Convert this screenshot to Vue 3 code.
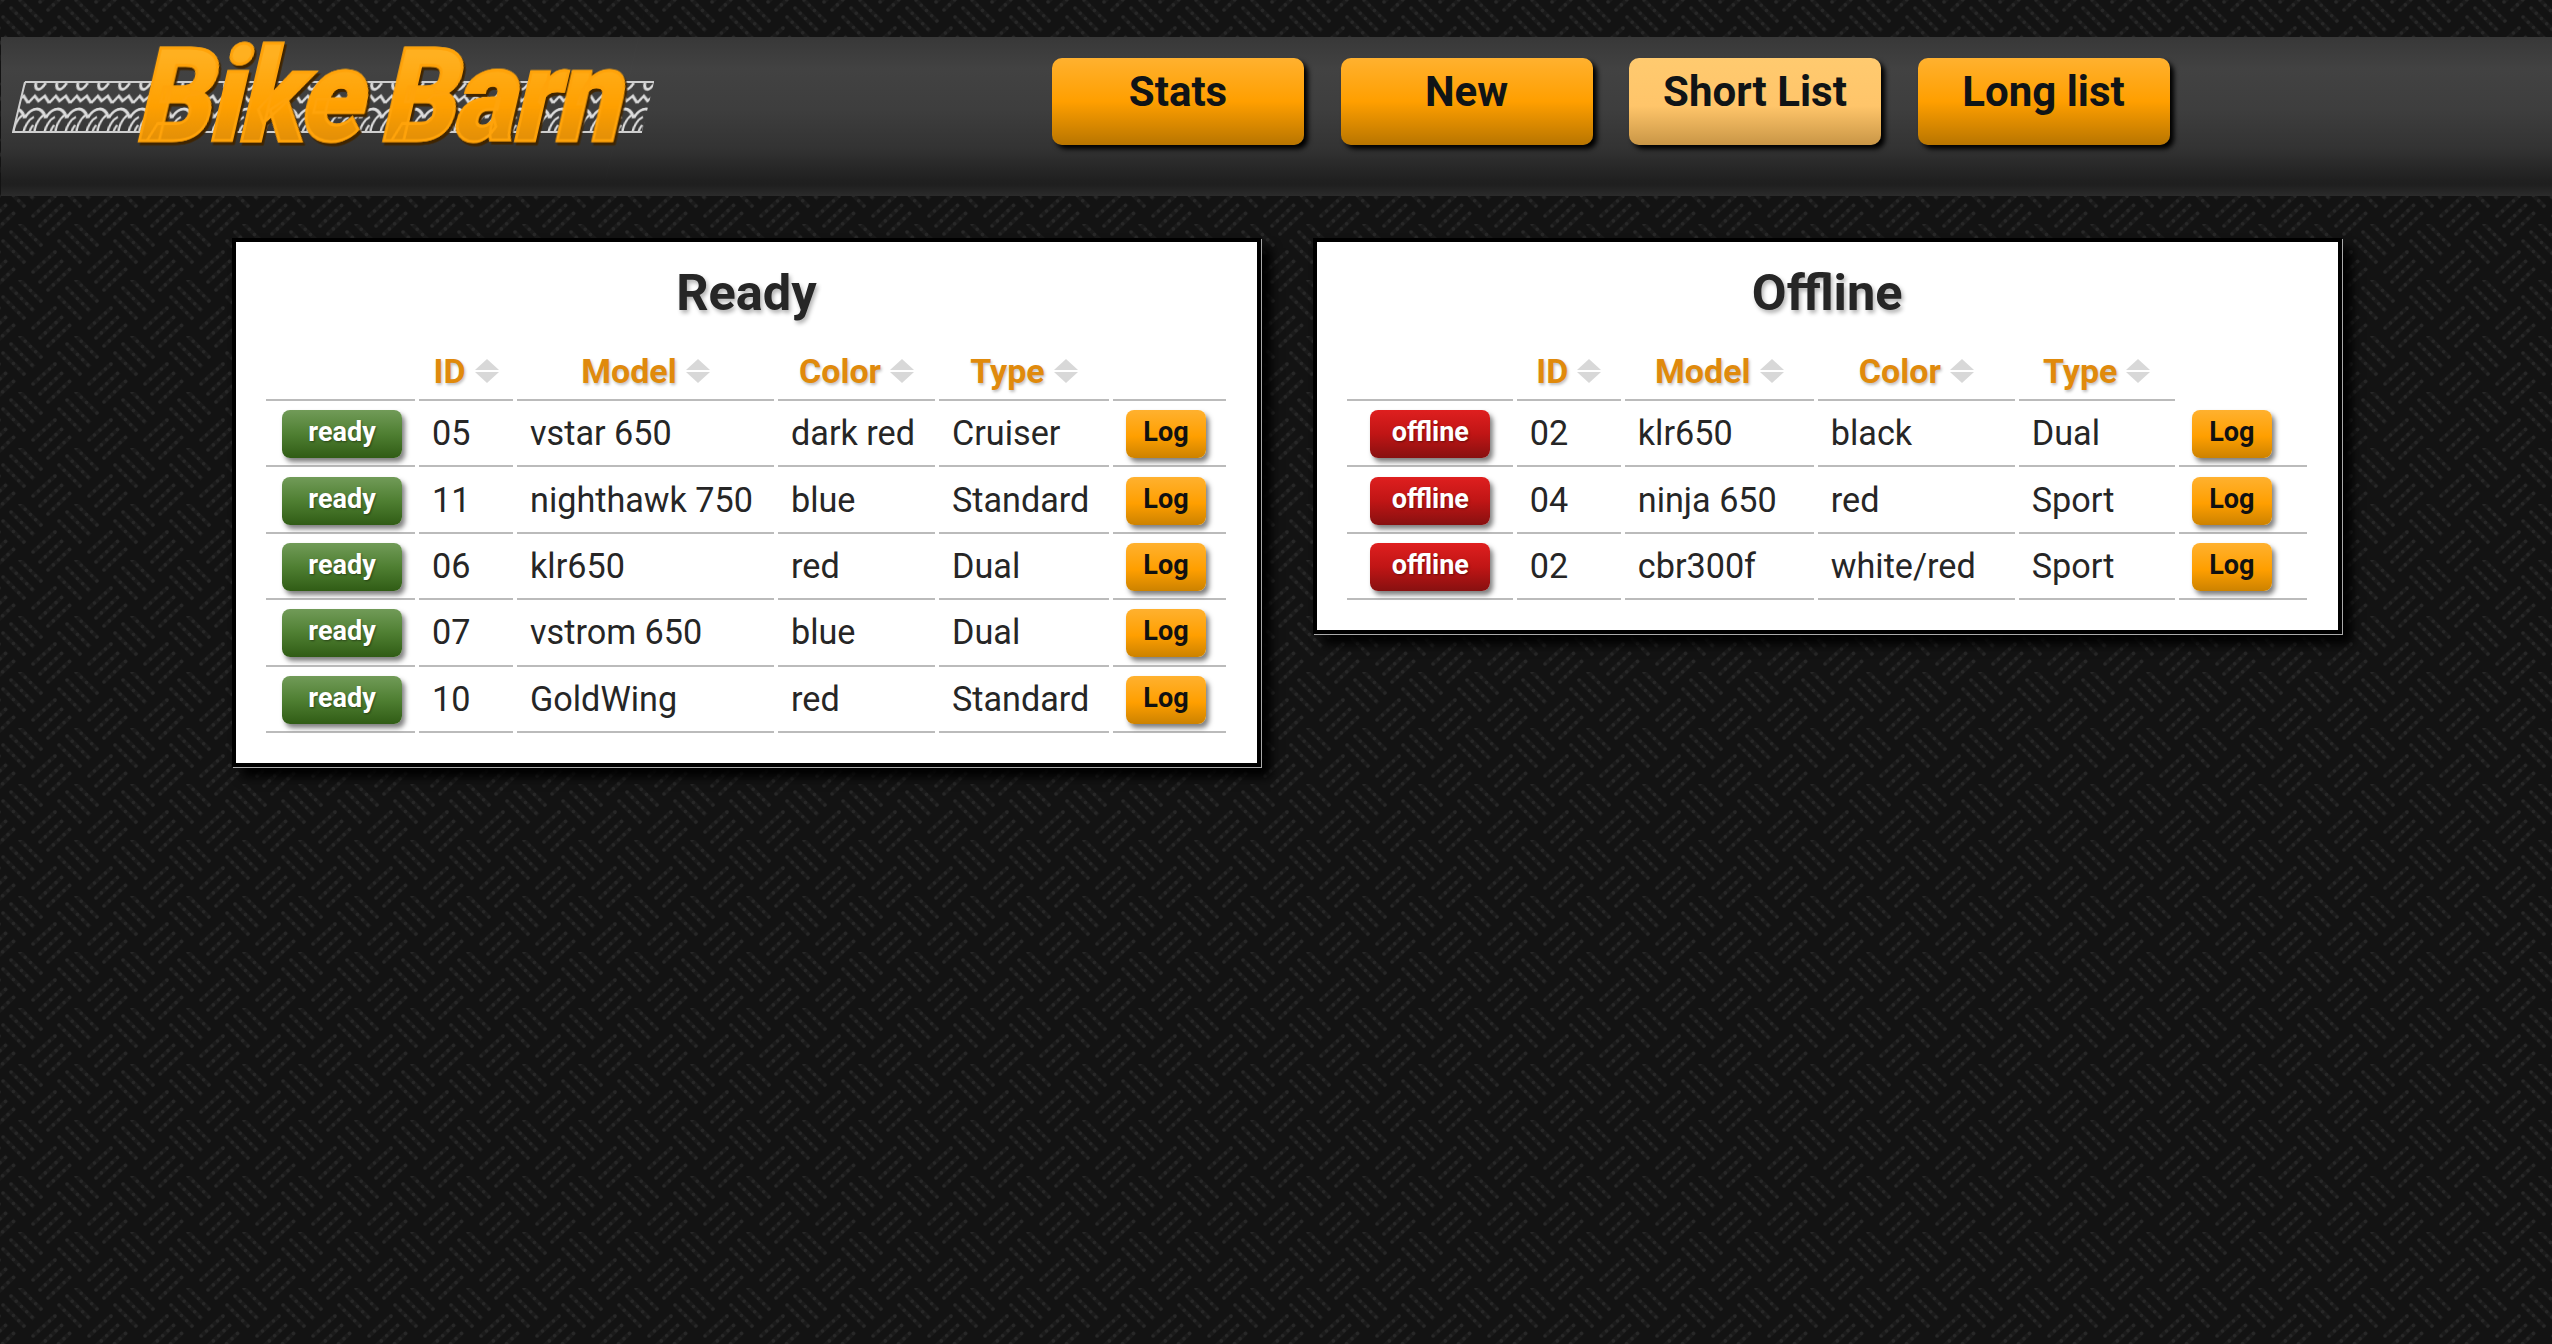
<script setup>
// navigation buttons in the header
const navItems = [
  { label: "Stats", active: false },
  { label: "New", active: false },
  { label: "Short List", active: true },
  { label: "Long list", active: false },
];

const columns = ["ID", "Model", "Color", "Type"];

const panels = [
  {
    title: "Ready",
    status: "ready",
    widths: [149, 94, 257, 157, 170, 113],
    logHeaderLine: true,
    bikes: [
      { id: "05", model: "vstar 650", color: "dark red", type: "Cruiser" },
      { id: "11", model: "nighthawk 750", color: "blue", type: "Standard" },
      { id: "06", model: "klr650", color: "red", type: "Dual" },
      { id: "07", model: "vstrom 650", color: "blue", type: "Dual" },
      { id: "10", model: "GoldWing", color: "red", type: "Standard" },
    ],
  },
  {
    title: "Offline",
    status: "offline",
    widths: [166, 104, 189, 197, 156, 128],
    logHeaderLine: false,
    bikes: [
      { id: "02", model: "klr650", color: "black", type: "Dual" },
      { id: "04", model: "ninja 650", color: "red", type: "Sport" },
      { id: "02", model: "cbr300f", color: "white/red", type: "Sport" },
    ],
  },
];
</script>

<template>
  <div class="page">
    <header class="topbar">
      <div class="logo">
        <svg class="tread" width="644" height="54" viewBox="0 0 644 54">
          <defs>
            <pattern id="tread-tile" width="21" height="50" patternUnits="userSpaceOnUse" patternTransform="translate(0 2) skewX(-13)">
              <path d="M3 1C4 9 9 10 13 1" fill="none" stroke="#dcdcdc" stroke-width="2.8" />
              <path d="M0 21L5 14L10 19L15 14L21 21" fill="none" stroke="#dcdcdc" stroke-width="2.6" />
              <path d="M0 36C4 25 14 23 21 36" fill="none" stroke="#dcdcdc" stroke-width="2.8" />
              <path d="M2 50C2 43 5 37 9 35M13 50C12 44 14 37 18 33M8 50C8 47 9 45 10 43" fill="none" stroke="#dcdcdc" stroke-width="2.4" />
            </pattern>
          </defs>
          <polygon points="13,2 642,2 630,52 1,52" fill="url(#tread-tile)" />
          <path d="M13 2H642M630 52H1L13 2" fill="none" stroke="#cfcfcf" stroke-width="2" />
        </svg>
        <span class="logo-text">Bike Barn</span>
      </div>
      <nav class="nav">
        <a v-for="item in navItems" :key="item.label" class="nav-button" :class="{ active: item.active }">
          {{ item.label }}
        </a>
      </nav>
    </header>

    <main class="panels">
      <section v-for="panel in panels" :key="panel.title" class="panel">
        <h2>{{ panel.title }}</h2>
        <table>
          <colgroup>
            <col v-for="(w, i) in panel.widths" :key="i" :style="{ width: w + 'px' }" />
          </colgroup>
          <thead>
            <tr>
              <th></th>
              <th v-for="col in columns" :key="col">
                <span class="th-inner">
                  {{ col }}
                  <svg class="sort" width="24" height="24" viewBox="0 0 24 24">
                    <path d="M12 0L24 11H0Z" fill="#d8d8d8" />
                    <path d="M0 13H24L12 24Z" fill="#d8d8d8" />
                  </svg>
                </span>
              </th>
              <th :class="{ 'no-line': !panel.logHeaderLine }"></th>
            </tr>
          </thead>
          <tbody>
            <tr v-for="bike in panel.bikes" :key="bike.model">
              <td class="status-cell" :class="panel.status">
                <span class="badge" :class="panel.status">{{ panel.status }}</span>
              </td>
              <td>{{ bike.id }}</td>
              <td>{{ bike.model }}</td>
              <td>{{ bike.color }}</td>
              <td>{{ bike.type }}</td>
              <td><span class="log-button">Log</span></td>
            </tr>
          </tbody>
        </table>
      </section>
    </main>
  </div>
</template>

<style>
html,
body {
  margin: 0;
  background: #141414;
}
</style>

<style scoped>
.page {
  min-height: 1344px;
  padding-top: 37px;
  box-sizing: border-box;
  font-family: Roboto, "Liberation Sans", sans-serif;
  background-color: #131313;
  background-image: url("data:image/svg+xml,%3Csvg xmlns='http://www.w3.org/2000/svg' xmlns:xlink='http://www.w3.org/1999/xlink' width='56' height='56'%3E%3Cdefs%3E%3Cg id='l'%3E%3Cpath d='M20 0L42 22M11 8L34 31M3 17L25 39'/%3E%3Cpath d='M33 48L55 28M40 58L63 36M48 66L71 44'/%3E%3C/g%3E%3Cg id='a' fill='none'%3E%3Cuse xlink:href='%23l' stroke='%231a1a1a' stroke-width='4'/%3E%3Cuse xlink:href='%23l' stroke='%23282828' stroke-width='3.6' stroke-linecap='round' stroke-dasharray='0 7.4'/%3E%3C/g%3E%3C/defs%3E%3Cuse xlink:href='%23a'/%3E%3Cuse xlink:href='%23a' x='-56'/%3E%3Cuse xlink:href='%23a' y='-56'/%3E%3Cuse xlink:href='%23a' x='-56' y='-56'/%3E%3C/svg%3E");
}

.topbar {
  display: flex;
  height: 159px;
  margin-left: 1px;
  background: linear-gradient(#383838 0%, #424242 20%, #3e3e3e 45%, #333 70%, #202020 90%, #1f1f1f 93%, #2b2b2b 100%);
}

.logo {
  position: relative;
  width: 1051px;
  flex: none;
}

.tread {
  position: absolute;
  left: 11px;
  top: 43px;
}

.logo-text {
  position: absolute;
  left: 123px;
  top: -23px;
  font-size: 130px;
  line-height: 166px;
  font-weight: 900;
  letter-spacing: -2px;
  white-space: nowrap;
  word-spacing: -8px;
  color: transparent;
  background: linear-gradient(#ffb020 25%, #ffa000 55%, #e08d08 78%);
  -webkit-background-clip: text;
  background-clip: text;
  -webkit-text-stroke: 3px #ffa30a;
  transform-origin: left bottom;
  transform: skewX(-13deg) scaleX(0.89);
  filter: drop-shadow(3px 3px 0 #3f2400);
}

.nav {
  display: flex;
  gap: 36.5px;
  padding-top: 21px;
}

.nav-button {
  width: 252px;
  height: 87px;
  box-sizing: border-box;
  padding-top: 8px;
  text-align: center;
  font-size: 42px;
  line-height: 52px;
  font-weight: 700;
  color: #101416;
  border-radius: 10px;
  background: linear-gradient(#ffb12f 0%, #ff9f00 50%, #b87500 100%);
  box-shadow: 4px 4px 5px #000;
}

.nav-button.active {
  background: linear-gradient(#ffca6f 0%, #ffc56a 55%, #c99646 100%);
}

.panels {
  display: flex;
  align-items: flex-start;
  gap: 52px;
  padding: 42px 0 0 232px;
}

.panel {
  width: 1028.8px;
  box-sizing: border-box;
  padding: 0 26px 30px;
  background: #fff;
  border: 4px solid #000;
  box-shadow: 1px 1px 0 #aaa, 10px 10px 10px #000;
}

h2 {
  margin: 0;
  height: 98px;
  padding-top: 21px;
  box-sizing: border-box;
  text-align: center;
  font-size: 50.5px;
  line-height: 60px;
  font-weight: 700;
  color: #262626;
  text-shadow: 2px 3px 4px rgba(0, 0, 0, 0.3);
}

table {
  width: 968px;
  table-layout: fixed;
  border-collapse: separate;
  border-spacing: 4px 0;
  color: #262626;
}

th {
  height: 57px;
  padding: 2px 0 0;
  border-bottom: 2px solid #bbb;
  color: #e08a0c;
  font-size: 34px;
  font-weight: 700;
  text-shadow: 1px 2px 3px rgba(0, 0, 0, 0.25);
}

th.no-line {
  border-bottom: none;
}

.th-inner {
  display: inline-flex;
  align-items: center;
  gap: 9px;
}

td {
  height: 66.4px;
  box-sizing: border-box;
  padding: 0 0 0 13px;
  border-bottom: 2px solid #bbb;
  font-size: 34.2px;
  font-weight: 400;
  white-space: nowrap;
  vertical-align: middle;
}

.status-cell {
  padding: 0;
  text-align: center;
}

.status-cell.ready {
  padding-left: 3px;
}

.status-cell.offline {
  padding-left: 1px;
}

.badge,
.log-button {
  display: inline-block;
  vertical-align: middle;
  height: 48px;
  margin-top: 2px;
  line-height: 45px;
  border-radius: 8px;
  text-align: center;
  font-size: 27px;
  font-weight: 700;
  box-shadow: 3px 4px 5px rgba(0, 0, 0, 0.5);
}

.badge {
  width: 120px;
  color: #fff;
  text-shadow: 1px 1px 2px rgba(0, 0, 0, 0.4);
}

.badge.ready {
  background: linear-gradient(#719b58 0%, #4f7f32 50%, #305c15 100%);
}

.badge.offline {
  background: linear-gradient(#df1f1f 0%, #c01515 50%, #871010 100%);
}

.log-button {
  width: 80px;
  color: #111;
  background: linear-gradient(#ffb12f 0%, #ff9f00 55%, #cc8200 100%);
}
</style>
